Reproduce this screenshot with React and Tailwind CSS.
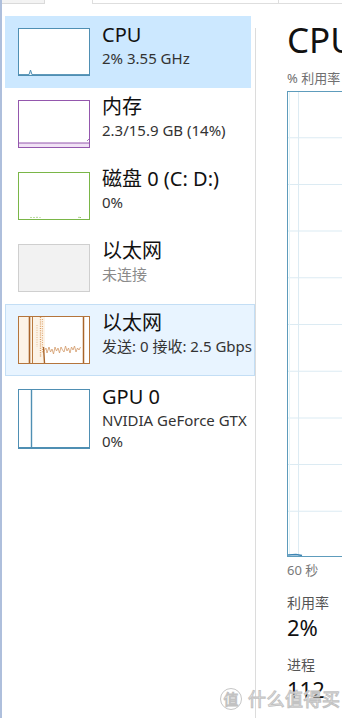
import React from 'react';

const FONT = "font-['Noto_Sans','Noto_Sans_CJK_SC',sans-serif]";

// little charts inside the sidebar thumbnails
const CpuSpark = () => (
  <svg className="block h-full w-full" viewBox="0 0 70 46" preserveAspectRatio="none">
    <path d="M0 45.6 L10 45.6 L11.5 41 L13 45.6 L70 45.6" fill="#dcebf5" stroke="#4f8fb3" strokeWidth="1" />
  </svg>
);

const MemSpark = () => (
  <svg className="block h-full w-full" viewBox="0 0 70 46" preserveAspectRatio="none">
    <rect x="0" y="42" width="70" height="4" fill="#f1e2f5" />
    <path d="M0 42 L70 42" stroke="#9457ad" strokeWidth="1" />
    <path d="M68 40 L70 38" stroke="#9457ad" strokeWidth="0.8" />
  </svg>
);

const DiskSpark = () => (
  <svg className="block h-full w-full" viewBox="0 0 70 46" preserveAspectRatio="none">
    <path d="M12 45 L12 44 M15 45 L15 44 M18 45 L18 43.8 M21 45 L21 44.3 M60 45 L60 43.8 M61.5 45 L61.5 44.2" stroke="#7ab648" strokeWidth="1" />
  </svg>
);

const NetSpark = () => (
  <svg className="block h-full w-full" viewBox="0 0 70 46" preserveAspectRatio="none">
    <rect x="0" y="0" width="26" height="46" fill="#fbeedd" opacity="0.7" />
    <path d="M10.5 0 L10.5 46" stroke="#a8642a" strokeWidth="1.6" />
    <path d="M13.5 0 L13.5 46" stroke="#b97a40" strokeWidth="1" />
    <path d="M21.5 0 L21.5 40" stroke="#d99b60" strokeWidth="1.3" strokeDasharray="1 1.2" />
    <path d="M23.5 2 L23.5 36" stroke="#e0aa78" strokeWidth="1.1" strokeDasharray="1 1.3" />
    <path d="M18 8 L18 30" stroke="#e6b88c" strokeWidth="1" strokeDasharray="1 1.4" />
    <path d="M24.5 30 L25.5 46" stroke="#a8642a" strokeWidth="1.4" />
    <path
      d="M25 34 L27 31 L28 36 L30 30 L31.5 35 L33 32 L34.5 37 L36 30 L37.5 34 L39 31 L40.5 36 L42 30 L43.5 33 L45 35 L46.5 29 L48 34 L49.5 31 L51 36 L52.5 30 L54 33 L55.5 29 L57 35 L58.5 31 L60 33 L61.5 30"
      fill="none"
      stroke="#d39a6a"
      strokeWidth="0.8"
    />
    <path d="M64.5 0 L64.5 46" stroke="#a8642a" strokeWidth="1.5" />
  </svg>
);

const GpuSpark = () => (
  <svg className="block h-full w-full" viewBox="0 0 70 58" preserveAspectRatio="none">
    <path d="M12.5 0 L12.5 58" stroke="#4f8fb3" strokeWidth="1.4" />
    <path d="M0 57.5 L70 57.5" stroke="#4f8fb3" strokeWidth="1" />
  </svg>
);

const SideItem = ({ variant, thumbClass, chart, title, lines, muted }) => {
  const shell =
    variant === 'selected'
      ? 'mr-[4px] bg-[#cce8ff]'
      : variant === 'hover'
        ? 'bg-[#e8f4ff] shadow-[inset_0_0_0_1px_#c3def5]'
        : 'mr-[4px]';
  return (
    <div className={`flex h-[72px] items-start overflow-hidden pl-[13px] ${shell}`}>
      <div className={`mt-[12px] w-[72px] shrink-0 overflow-hidden border ${thumbClass}`}>{chart}</div>
      <div className="ml-[12px] min-w-0 flex-1 whitespace-nowrap pt-[6px]">
        <div className="text-[20px] leading-[26px] text-[#111]">{title}</div>
        {lines.map((l) => (
          <div key={l} className={`text-[15px] leading-[21px] ${muted ? 'text-[#8a8a8a]' : 'text-[#333]'}`}>
            {l}
          </div>
        ))}
      </div>
    </div>
  );
};

const MainGraph = () => {
  const rows = [1, 2, 3, 4, 5, 6, 7, 8, 9];
  return (
    <div className="mt-[4px] h-[466px] w-[300px] border-[1.5px] border-[#5e9cbc] bg-white">
      <svg className="block h-full w-full" viewBox="0 0 297 463" preserveAspectRatio="none">
        {rows.map((r) => (
          <path key={r} d={`M0 ${r * 46.6 - 1} L297 ${r * 46.6 - 1}`} stroke="#dcebf3" strokeWidth="1" />
        ))}
        <path d="M10.5 0 L10.5 463" stroke="#dcebf3" strokeWidth="1" />
        <path d="M1.5 0 L1.5 463" stroke="#e3f4f8" strokeWidth="1" />
        <path d="M0 462 L8 461.5 L14 462.5" fill="none" stroke="#3f86b4" strokeWidth="1.5" />
      </svg>
    </div>
  );
};

export default function App() {
  return (
    <div className={`relative flex h-[718px] w-[342px] flex-col overflow-hidden border-l-2 border-[#aebfdc] bg-white ${FONT}`}>
      {/* leftover bits of the tab strip above */}
      <div className="flex h-[4px] shrink-0">
        <div className="w-[43px] border-r border-b border-[#dadada] bg-[#f3f3f3]" />
        <div className="w-[47px]" />
        <div className="flex-1 border-b border-l border-[#dedede]">
          <div className="ml-[185px] h-full w-px bg-[#dedede]" />
        </div>
      </div>

      <div className="flex min-h-0 flex-1">
        {/* sidebar */}
        <div className="w-[253px] shrink-0 pt-[12px] pl-[3px]">
          <SideItem
            variant="selected"
            thumbClass="h-[48px] border-[#4f8fb3] bg-white"
            chart={<CpuSpark />}
            title="CPU"
            lines={['2% 3.55 GHz']}
          />
          <SideItem
            thumbClass="h-[48px] border-[#9457ad] bg-white"
            chart={<MemSpark />}
            title="内存"
            lines={['2.3/15.9 GB (14%)']}
          />
          <SideItem
            thumbClass="h-[48px] border-[#7ab648] bg-white"
            chart={<DiskSpark />}
            title="磁盘 0 (C: D:)"
            lines={['0%']}
          />
          <SideItem
            thumbClass="h-[48px] border-[#cfcfcf] bg-[#f2f2f2]"
            chart={null}
            title="以太网"
            lines={['未连接']}
            muted
          />
          <SideItem
            variant="hover"
            thumbClass="h-[48px] border-[#b5753c] bg-white"
            chart={<NetSpark />}
            title="以太网"
            lines={['发送: 0 接收: 2.5 Gbps']}
          />
          <div className="flex items-start overflow-hidden pl-[13px] mr-[4px]">
            <div className="mt-[13px] h-[60px] w-[72px] shrink-0 overflow-hidden border border-[#4f8fb3] bg-white">
              <GpuSpark />
            </div>
            <div className="ml-[12px] min-w-0 flex-1 whitespace-nowrap pt-[8px]">
              <div className="text-[20px] leading-[26px] text-[#111]">GPU 0</div>
              <div className="text-[15px] leading-[21px] text-[#333]">NVIDIA GeForce GTX</div>
              <div className="text-[15px] leading-[21px] text-[#333]">0%</div>
            </div>
          </div>
        </div>

        {/* divider */}
        <div className="mt-[24px] w-px shrink-0 bg-[#dcdcdc]" />

        {/* detail pane */}
        <div className="min-w-0 flex-1 overflow-hidden whitespace-nowrap pt-[15.5px] pl-[31px]">
          <div className="text-[35px] leading-[40px] text-[#111]">CPU</div>
          <div className="mt-[10px] text-[13px] leading-[17px] text-[#707070]">% 利用率</div>
          <MainGraph />
          <div className="mt-[5px] text-[13px] leading-[16px] text-[#7a7a7a]">60 秒</div>
          <div className="mt-[15px] text-[14px] leading-[20px] text-[#555]">利用率</div>
          <div className="text-[22px] leading-[28px] text-[#111]">2%</div>
          <div className="mt-[14px] text-[14px] leading-[20px] text-[#555]">进程</div>
          <div className="text-[22px] leading-[28px] text-[#111]">112</div>
        </div>
      </div>

      {/* site watermark laid over the corner */}
      <div className="absolute top-[688px] left-[218px] flex items-center gap-[6px] text-white [-webkit-text-stroke:1px_#c2c2c2]">
        <div className="flex h-[22px] w-[22px] items-center justify-center rounded-full border-[1.5px] border-[#c6c6c6] text-[15px] leading-none">
          值
        </div>
        <div className="text-[18px] leading-[22px] tracking-[0.5px]">什么值得买</div>
      </div>
    </div>
  );
}
